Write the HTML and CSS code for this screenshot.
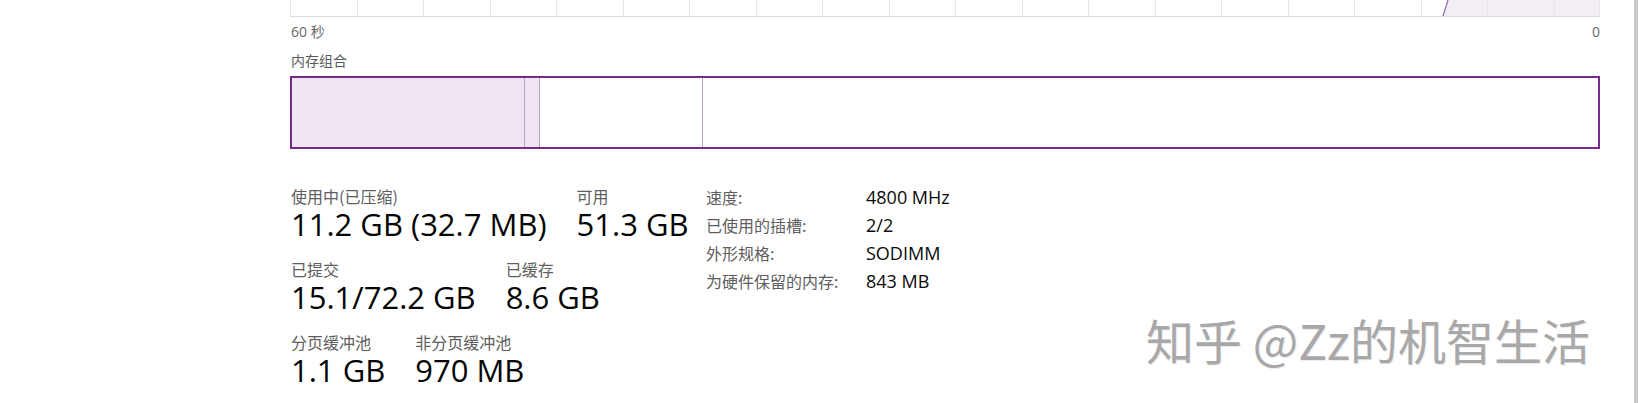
FILE: index.html
```html
<!DOCTYPE html>
<html lang="zh-CN">
<head>
<meta charset="utf-8">
<title>内存</title>
<link rel="stylesheet" href="styles.css">
</head>
<body>
<div class="window">
  <main class="main">
    <section class="panel">
      <svg class="graph" width="1310" height="17" viewBox="0 0 1310 17">
        <polygon points="1158,0 1153,17 1310,17 1310,0" fill="#f3eef6"/>
        <g stroke="#e8e8e8" stroke-width="1">
          <line x1="67.5" y1="0" x2="67.5" y2="17"/>
          <line x1="133.5" y1="0" x2="133.5" y2="17"/>
          <line x1="200.5" y1="0" x2="200.5" y2="17"/>
          <line x1="266.5" y1="0" x2="266.5" y2="17"/>
          <line x1="333.5" y1="0" x2="333.5" y2="17"/>
          <line x1="399.5" y1="0" x2="399.5" y2="17"/>
          <line x1="466.5" y1="0" x2="466.5" y2="17"/>
          <line x1="532.5" y1="0" x2="532.5" y2="17"/>
          <line x1="599.5" y1="0" x2="599.5" y2="17"/>
          <line x1="665.5" y1="0" x2="665.5" y2="17"/>
          <line x1="732.5" y1="0" x2="732.5" y2="17"/>
          <line x1="798.5" y1="0" x2="798.5" y2="17"/>
          <line x1="865.5" y1="0" x2="865.5" y2="17"/>
          <line x1="931.5" y1="0" x2="931.5" y2="17"/>
          <line x1="998.5" y1="0" x2="998.5" y2="17"/>
          <line x1="1064.5" y1="0" x2="1064.5" y2="17"/>
          <line x1="1131.5" y1="0" x2="1131.5" y2="17"/>
          <line x1="1197.5" y1="0" x2="1197.5" y2="17"/>
          <line x1="1264.5" y1="0" x2="1264.5" y2="17"/>
          <line x1="0.5" y1="0" x2="0.5" y2="17"/>
          <line x1="1309.5" y1="0" x2="1309.5" y2="17"/>
        </g>
        <line x1="0" y1="16.5" x2="1310" y2="16.5" stroke="#dcdcdc" stroke-width="1"/>
        <line x1="1158" y1="0" x2="1153" y2="16" stroke="#9166a8" stroke-width="1.2"/>
      </svg>
      <div class="axis">
        <span>60 秒</span>
        <span>0</span>
      </div>
      <div class="section-title">内存组合</div>
      <div class="composition">
        <div class="seg seg-inuse"></div>
        <div class="seg seg-modified"></div>
        <div class="seg seg-standby"></div>
        <div class="seg seg-free"></div>
      </div>
      <div class="stats">
        <div class="stats-left">
          <div class="stat-row">
            <div class="stat">
              <div class="label">使用中(已压缩)</div>
              <div class="value">11.2 GB (32.7 MB)</div>
            </div>
            <div class="stat">
              <div class="label">可用</div>
              <div class="value">51.3 GB</div>
            </div>
          </div>
          <div class="stat-row">
            <div class="stat">
              <div class="label">已提交</div>
              <div class="value">15.1/72.2 GB</div>
            </div>
            <div class="stat">
              <div class="label">已缓存</div>
              <div class="value">8.6 GB</div>
            </div>
          </div>
          <div class="stat-row">
            <div class="stat">
              <div class="label">分页缓冲池</div>
              <div class="value">1.1 GB</div>
            </div>
            <div class="stat">
              <div class="label">非分页缓冲池</div>
              <div class="value">970 MB</div>
            </div>
          </div>
        </div>
        <dl class="specs">
          <dt>速度:</dt><dd>4800 MHz</dd>
          <dt>已使用的插槽:</dt><dd>2/2</dd>
          <dt>外形规格:</dt><dd>SODIMM</dd>
          <dt>为硬件保留的内存:</dt><dd>843 MB</dd>
        </dl>
      </div>
    </section>
    <div class="watermark">知乎 @Zz的机智生活</div>
  </main>
  <div class="scrollbar"></div>
</div>
</body>
</html>
```
FILE: styles.css
```css
html, body {
  margin: 0;
  padding: 0;
  background: #ffffff;
}

body {
  width: 1638px;
  height: 403px;
  overflow: hidden;
  font-family: "Open Sans", "Noto Sans CJK SC", sans-serif;
  color: #111111;
}

.window {
  display: flex;
  width: 1638px;
  height: 403px;
}

.main {
  flex: 1;
  position: relative;
  padding-left: 290px;
}

.scrollbar {
  width: 4px;
  height: 403px;
  background: #c9c9c9;
}

.panel {
  width: 1310px;
  display: flex;
  flex-direction: column;
}

.graph {
  display: block;
}

.axis {
  display: flex;
  justify-content: space-between;
  margin-top: 5px;
  font-size: 14px;
  line-height: 19px;
  color: #6a6a6a;
  padding-left: 1px;
}

.section-title {
  margin-top: 10px;
  font-family: "Noto Sans CJK SC", sans-serif;
  font-size: 14px;
  line-height: 19px;
  color: #5a5a5a;
  padding-left: 1px;
}

.composition {
  margin-top: 6px;
  height: 73px;
  box-sizing: border-box;
  border: 2px solid #762b8a;
  display: flex;
}

.seg {
  height: 100%;
}

.seg-inuse {
  width: 232px;
  background: #efe5f3;
  border-right: 1px solid #b8a2c2;
}

.seg-modified {
  width: 14px;
  background: #efe5f3;
  border-right: 1px solid #b8a2c2;
}

.seg-standby {
  width: 162px;
  background: #ffffff;
  border-right: 1px solid #b8a2c2;
}

.seg-free {
  flex: 1;
  background: #ffffff;
}

.stats {
  display: flex;
  margin-top: 37px;
  padding-left: 1px;
}

.stats-left {
  width: 415px;
  display: flex;
  flex-direction: column;
  gap: 17px;
}

.stat-row {
  display: flex;
  gap: 30px;
}

.label {
  font-family: "Noto Sans CJK SC", sans-serif;
  font-size: 16px;
  line-height: 20px;
  color: #5e5e5e;
}

.value {
  font-family: "Open Sans", sans-serif;
  font-size: 31px;
  line-height: 36px;
  color: #050505;
  white-space: nowrap;
}

.specs {
  margin: -3px 0 0 0;
  display: grid;
  grid-template-columns: 160px auto;
  align-content: start;
}

.specs dt {
  font-family: "Noto Sans CJK SC", sans-serif;
  font-size: 16px;
  line-height: 28px;
  color: #5e5e5e;
}

.specs dd {
  margin: 0;
  font-family: "Open Sans", sans-serif;
  font-size: 18px;
  line-height: 28px;
  color: #0a0a0a;
}

.watermark {
  position: absolute;
  left: 1146px;
  top: 314px;
  font-family: "Noto Sans CJK SC", sans-serif;
  font-size: 48px;
  font-weight: 400;
  line-height: 50px;
  color: #a8a8a8;
  text-shadow: 1px 1px 0 #ececec;
  white-space: nowrap;
}
```
